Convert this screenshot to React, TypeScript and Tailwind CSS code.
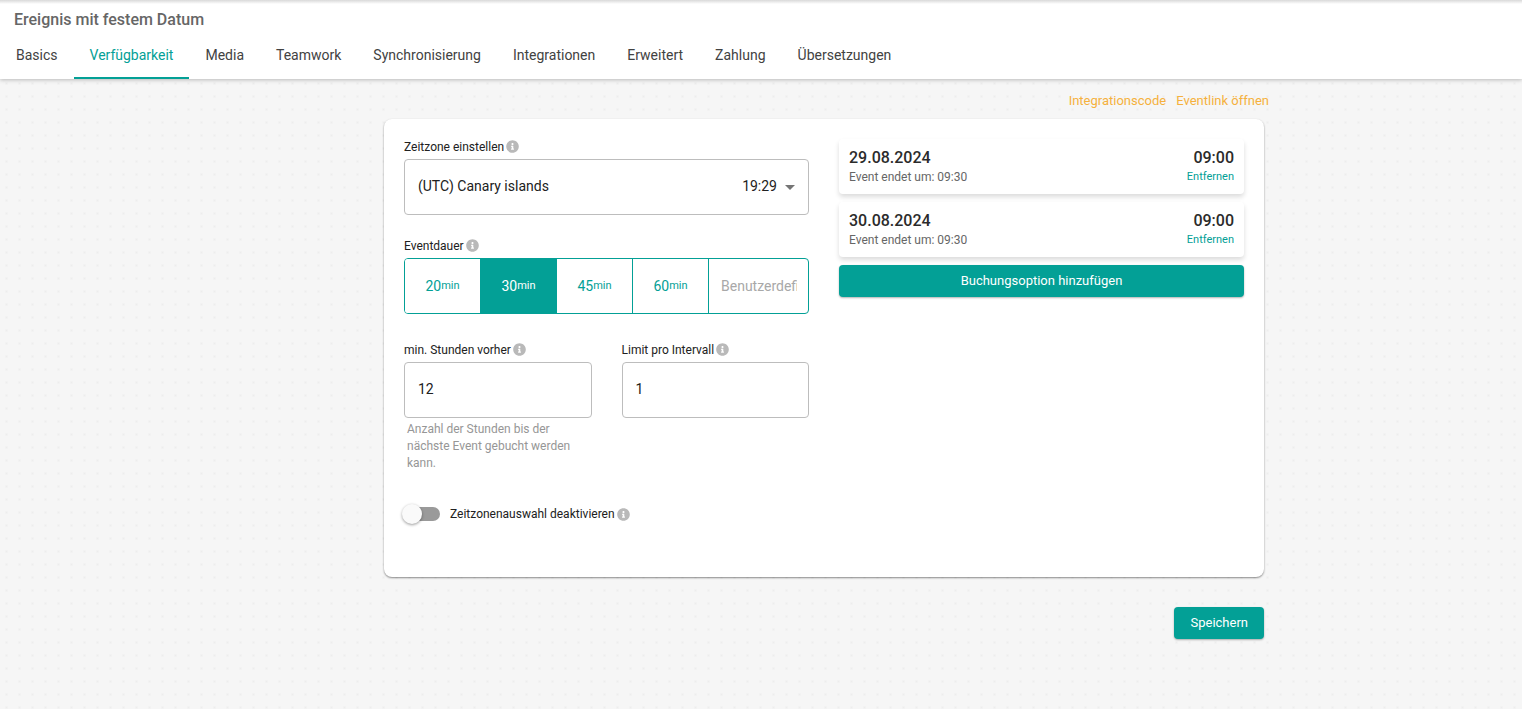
import { useState, type ReactNode } from "react";
import { FaInfoCircle } from "react-icons/fa";

const tabs = [
  "Basics",
  "Verfügbarkeit",
  "Media",
  "Teamwork",
  "Synchronisierung",
  "Integrationen",
  "Erweitert",
  "Zahlung",
  "Übersetzungen",
];

const durations = [20, 30, 45, 60];

const bookings = [
  { date: "29.08.2024", start: "09:00", end: "09:30" },
  { date: "30.08.2024", start: "09:00", end: "09:30" },
];

function InfoIcon() {
  return <FaInfoCircle aria-hidden="true" className="size-[13px] shrink-0 text-[#b9b9b9]" />;
}

function FieldLabel({ htmlFor, children }: { htmlFor: string; children: ReactNode }) {
  return (
    <label htmlFor={htmlFor} className="flex h-5 items-start gap-[2px] text-xs leading-4 text-[#212121]">
      {children}
      <span className="pt-[1px]">
        <InfoIcon />
      </span>
    </label>
  );
}

function NumberField({ id, label, value, hint }: { id: string; label: string; value: string; hint?: string }) {
  return (
    <div className="min-w-0">
      <FieldLabel htmlFor={id}>{label}</FieldLabel>
      <input
        id={id}
        inputMode="numeric"
        defaultValue={value}
        aria-describedby={hint ? `${id}-hint` : undefined}
        className="block h-14 w-full rounded border border-[#bdbdbd] bg-white px-[13px] pb-[2px] text-sm text-[#212121]"
      />
      {hint && (
        <p id={`${id}-hint`} className="px-[3px] pt-[3px] text-xs leading-[17px] text-[#969696]">
          {hint}
        </p>
      )}
    </div>
  );
}

export default function App() {
  const [tab, setTab] = useState("Verfügbarkeit");
  const [duration, setDuration] = useState(30);

  return (
    <div className="flex min-h-screen flex-col bg-[#f6f6f6] bg-[radial-gradient(circle,#ededed_0px,transparent_2px)] bg-size-[13px_13px] bg-position-[0px_-1px] font-[Roboto,'Liberation_Sans',sans-serif] text-[#212121]">
      <header className="bg-white bg-linear-to-b from-[#d9d9d9] to-white to-[4px] shadow-[0_1px_4px_rgba(0,0,0,0.25)]">
        <h1 className="px-[14px] pt-2 text-base font-medium leading-6 text-[#666666]">Ereignis mit festem Datum</h1>
        <nav aria-label="Ereignis" className="flex flex-wrap">
          {tabs.map((name) => (
            <button
              key={name}
              type="button"
              aria-current={name === tab ? "page" : undefined}
              onClick={() => setTab(name)}
              className={`h-[47px] border-b-2 px-4 text-sm ${
                name === tab ? "border-[#03a096] text-[#03a096]" : "border-transparent text-[#424242]"
              }`}
            >
              {name}
            </button>
          ))}
        </nav>
      </header>

      <main className="pl-[126px]">
        <div className="mx-auto max-w-[880px]">
          <div className="-mr-[5px] flex h-10 items-center justify-end gap-[10px] pt-1 text-[13px] text-[#f5b13d]">
            <a href="#integrationscode">Integrationscode</a>
            <a href="#eventlink">Eventlink öffnen</a>
          </div>

          <form onSubmit={(e) => e.preventDefault()}>
            <section className="grid grid-cols-2 gap-[30px] rounded-lg bg-white p-5 pb-[53px] shadow-[0_1px_2px_rgba(0,0,0,0.45)]">
              <div className="min-w-0">
                <FieldLabel htmlFor="timezone">Zeitzone einstellen</FieldLabel>
                <div className="relative">
                  <select
                    id="timezone"
                    className="block h-14 w-full appearance-none rounded border border-[#bdbdbd] bg-white px-[13px] pb-[2px] text-sm text-[#212121]"
                  >
                    <option>(UTC) Canary islands</option>
                  </select>
                  <span className="pointer-events-none absolute inset-y-0 right-[14px] flex items-center gap-2 pb-[2px] text-sm">
                    19:29
                    <svg viewBox="0 0 10 5" className="mt-[3px] h-[5px] w-[10px] text-[#757575]" aria-hidden="true">
                      <path d="M0 0h10L5 5z" fill="currentColor" />
                    </svg>
                  </span>
                </div>

                <div className="pt-[23px]">
                  <FieldLabel htmlFor="custom-duration">Eventdauer</FieldLabel>
                  <div className="flex h-14 overflow-hidden rounded border border-[#03a096]">
                    {durations.map((minutes) => (
                      <button
                        key={minutes}
                        type="button"
                        aria-pressed={minutes === duration}
                        onClick={() => setDuration(minutes)}
                        className={`flex w-[76px] shrink-0 items-center justify-center border-r border-[#03a096] text-sm ${
                          minutes === duration ? "bg-[#03a096] text-white" : "bg-white text-[#03a096]"
                        }`}
                      >
                        {minutes}
                        <span className="text-[11px]">min</span>
                      </button>
                    ))}
                    <input
                      id="custom-duration"
                      placeholder="Benutzerdefiniert"
                      className="ml-3 mr-[11px] min-w-0 flex-1 bg-white text-sm placeholder:text-[#a8a8a8]"
                    />
                  </div>
                </div>

                <div className="grid grid-cols-2 gap-[30px] pt-7">
                  <NumberField
                    id="lead-hours"
                    label="min. Stunden vorher"
                    value="12"
                    hint="Anzahl der Stunden bis der nächste Event gebucht werden kann."
                  />
                  <NumberField id="interval-limit" label="Limit pro Intervall" value="1" />
                </div>

                <label className="mt-8 flex h-5 items-center gap-[2px] text-xs">
                  <span className="relative mr-2 flex h-5 w-9 items-center">
                    <input type="checkbox" role="switch" className="peer absolute inset-0 z-10 size-full opacity-0" />
                    <span className="h-[14px] w-full rounded-full bg-[#9a9a9a] peer-checked:bg-[#80cfca]" />
                    <span className="absolute -left-[2px] top-0 size-5 rounded-full bg-[#fafafa] shadow-[0_1px_3px_rgba(0,0,0,0.4)] peer-checked:left-[18px] peer-checked:bg-[#03a096]" />
                  </span>
                  Zeitzonenauswahl deaktivieren
                  <InfoIcon />
                </label>
              </div>

              <div className="flex min-w-0 flex-col gap-2">
                {bookings.map((booking) => (
                  <article
                    key={booking.date}
                    className="flex h-[55px] items-center justify-between rounded px-[10px] pt-[1px] shadow-[0_3px_5px_rgba(0,0,0,0.14)]"
                  >
                    <div>
                      <h2 className="text-base font-medium leading-5 text-[#2b2b2b]">{booking.date}</h2>
                      <p className="text-xs leading-[18px] text-[#666666]">Event endet um: {booking.end}</p>
                    </div>
                    <div className="flex flex-col items-end">
                      <span className="text-base font-medium leading-5 text-[#2b2b2b]">{booking.start}</span>
                      <button type="button" className="text-[11px] leading-[18px] text-[#03a096]">
                        Entfernen
                      </button>
                    </div>
                  </article>
                ))}
                <button
                  type="button"
                  className="h-8 rounded bg-[#03a096] text-[13px] text-white shadow-[0_1px_2px_rgba(0,0,0,0.3)]"
                >
                  Buchungsoption hinzufügen
                </button>
              </div>
            </section>

            <div className="flex justify-end pb-8 pt-[30px]">
              <button
                type="submit"
                className="h-8 rounded bg-[#03a096] px-4 text-[13px] text-white shadow-[0_1px_2px_rgba(0,0,0,0.3)]"
              >
                Speichern
              </button>
            </div>
          </form>
        </div>
      </main>
    </div>
  );
}
